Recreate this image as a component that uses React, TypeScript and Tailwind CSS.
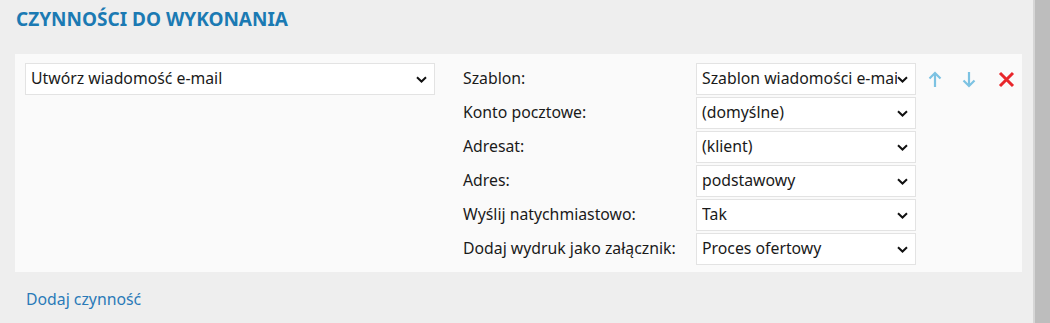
import React from "react";

const Chevron = () => (
  <svg width="11" height="7" viewBox="0 0 11 7" className="shrink-0">
    <path d="M1 1.2 L5.5 5.5 L10 1.2" fill="none" stroke="#111" strokeWidth="2" />
  </svg>
);

const Select = ({ value, className = "" }: { value: string; className?: string }) => (
  <div
    className={`flex h-[32px] items-center justify-between border border-[#e3e3e3] bg-white pl-[5px] pr-[7px] ${className}`}
  >
    <span className="min-w-0 overflow-hidden whitespace-nowrap pr-[4px]">{value}</span>
    <Chevron />
  </div>
);

const fields = [
  { label: "Szablon:", value: "Szablon wiadomości e-mail" },
  { label: "Konto pocztowe:", value: "(domyślne)" },
  { label: "Adresat:", value: "(klient)" },
  { label: "Adres:", value: "podstawowy" },
  { label: "Wyślij natychmiastowo:", value: "Tak" },
  { label: "Dodaj wydruk jako załącznik:", value: "Proces ofertowy" },
];

export default function App() {
  return (
    <div
      className="flex h-[323px] w-[1050px] overflow-hidden bg-[#eeeeee] text-[15.8px] text-[#1a1a1a]"
      style={{ fontFamily: '"Noto Sans", "Open Sans", sans-serif' }}
    >
      <div className="flex-1 pl-[15px] pr-[11px]">
        <h2 className="pt-[6px] pl-[1px] text-[19px] font-bold uppercase leading-[27px] text-[#1b7ab3]">
          Czynności do wykonania
        </h2>
        <div className="mt-[21px] flex h-[218px] items-start bg-[#fafafa] pl-[10px] pt-[9px]">
          <Select value="Utwórz wiadomość e-mail" className="w-[410px]" />
          <div className="ml-[28px] grid grid-cols-[233px_220px] content-start gap-y-[2px]">
            {fields.map((f) => (
              <React.Fragment key={f.label}>
                <div className="flex h-[32px] items-center">{f.label}</div>
                <Select value={f.value} />
              </React.Fragment>
            ))}
          </div>
          <div className="ml-[12px] flex h-[32px] items-center gap-[20px]">
            <svg width="14" height="17" viewBox="0 0 14 17">
              <path d="M7 16V2 M1.5 7.5 L7 2 L12.5 7.5" fill="none" stroke="#7cc2e2" strokeWidth="2.2" />
            </svg>
            <svg width="14" height="17" viewBox="0 0 14 17">
              <path d="M7 1V15 M1.5 9.5 L7 15 L12.5 9.5" fill="none" stroke="#7cc2e2" strokeWidth="2.2" />
            </svg>
            <svg width="17" height="17" viewBox="0 0 17 17" className="ml-[2px]">
              <path d="M2 2 L15 15 M15 2 L2 15" fill="none" stroke="#e8262b" strokeWidth="3" />
            </svg>
          </div>
        </div>
        <div className="pl-[11px] pt-[16px] text-[#2a7ab8]">Dodaj czynność</div>
      </div>
      <div className="w-[17px] border-l-[2px] border-[#d6d6d6] bg-[#bdbdbd]" />
    </div>
  );
}
